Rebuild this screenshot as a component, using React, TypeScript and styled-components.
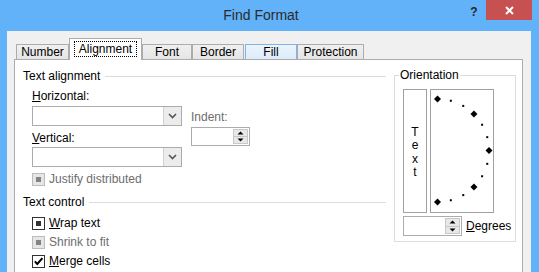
import styled, { createGlobalStyle } from "styled-components";

const GlobalStyle = createGlobalStyle`
  html, body { margin: 0; padding: 0; }
  body {
    font-family: "Liberation Sans", Arial, sans-serif;
    font-size: 12px;
    color: #000;
  }
`;

const TABS = ["Number", "Alignment", "Font", "Border", "Fill", "Protection"];
const TAB_WIDTHS: Record<string, number> = {
  Number: 53,
  Alignment: 73,
  Font: 50,
  Border: 52,
  Fill: 52,
  Protection: 67,
};

// dots on the orientation dial, 15 degree steps from -90 to 90
const DIAL_POINTS = Array.from({ length: 13 }, (_, i) => {
  const deg = -90 + i * 15;
  const rad = (deg * Math.PI) / 180;
  return {
    x: 6.5 + 51.5 * Math.cos(rad),
    y: 60.5 - 51.5 * Math.sin(rad),
    big: deg % 45 === 0,
  };
});

function Combo() {
  return (
    <ComboBox>
      <ComboField />
      <DropButton>
        <svg width="9" height="6" viewBox="0 0 9 6">
          <path d="M1 1 L4.5 4.5 L8 1" fill="none" stroke="#555" strokeWidth="1.6" />
        </svg>
      </DropButton>
    </ComboBox>
  );
}

function Spinner({ width, height }: { width: number; height: number }) {
  return (
    <SpinBox $w={width} $h={height}>
      <SpinField />
      <SpinButtons>
        <SpinButton>
          <svg width="7" height="4" viewBox="0 0 7 4">
            <path d="M0.5 3.5 L3.5 0.5 L6.5 3.5 Z" fill="#000" />
          </svg>
        </SpinButton>
        <SpinButton>
          <svg width="7" height="4" viewBox="0 0 7 4">
            <path d="M0.5 0.5 L3.5 3.5 L6.5 0.5 Z" fill="#000" />
          </svg>
        </SpinButton>
      </SpinButtons>
    </SpinBox>
  );
}

type CheckState = "checked" | "mixed";

function Check({
  state,
  disabled,
  children,
  top,
}: {
  state: CheckState;
  disabled?: boolean;
  children: React.ReactNode;
  top: number;
}) {
  return (
    <CheckRow $top={top} $disabled={disabled}>
      <CheckBox $disabled={disabled}>
        {state === "mixed" ? (
          <Mixed $disabled={disabled} />
        ) : (
          <svg width="11" height="11" viewBox="0 0 11 11">
            <path d="M1.8 5.4 L4.3 8 L9.4 2.2" fill="none" stroke="#000" strokeWidth="2" />
          </svg>
        )}
      </CheckBox>
      <span>{children}</span>
    </CheckRow>
  );
}

export default function App() {
  return (
    <>
      <GlobalStyle />
      <Window>
        <TitleBar>
          <Title>Find Format</Title>
          <HelpButton>?</HelpButton>
          <CloseButton>
            <svg width="9" height="9" viewBox="0 0 9 9">
              <path d="M1 1 L8 8 M8 1 L1 8" stroke="#fff" strokeWidth="2" />
            </svg>
          </CloseButton>
        </TitleBar>
        <Client>
          <TabRow>
            {TABS.map((t) => (
              <Tab
                key={t}
                $w={TAB_WIDTHS[t]}
                $active={t === "Alignment"}
                $hover={t === "Fill"}
              >
                {t === "Alignment" ? <Focus>{t}</Focus> : t}
              </Tab>
            ))}
          </TabRow>
          <Panel>
            <LeftCol>
              <SectionHeader>
                <span>Text alignment</span>
                <Rule />
              </SectionHeader>
              <AlignGrid>
                <Column>
                  <FieldLabel>
                    <u>H</u>orizontal:
                  </FieldLabel>
                  <ComboSlot $top={3}>
                    <Combo />
                  </ComboSlot>
                  <FieldLabel $top={5}>
                    <u>V</u>ertical:
                  </FieldLabel>
                  <ComboSlot $top={2}>
                    <Combo />
                  </ComboSlot>
                </Column>
                <Column>
                  <FieldLabel $top={21} $disabled>
                    Indent:
                  </FieldLabel>
                  <ComboSlot $top={3}>
                    <Spinner width={59} height={19} />
                  </ComboSlot>
                </Column>
              </AlignGrid>
              <Check state="mixed" disabled top={6}>
                Justify distributed
              </Check>
              <SectionHeader $top={9}>
                <span>Text control</span>
                <Rule />
              </SectionHeader>
              <Check state="mixed" top={8}>
                <u>W</u>rap text
              </Check>
              <Check state="mixed" disabled top={6}>
                Shrink to fit
              </Check>
              <Check state="checked" top={6}>
                <u>M</u>erge cells
              </Check>
            </LeftCol>
            <Group>
              <Legend>Orientation</Legend>
              <GroupBody>
                <OrientRow>
                  <TextBox>
                    <span>T</span>
                    <span>e</span>
                    <span>x</span>
                    <span>t</span>
                  </TextBox>
                  <Dial>
                    <svg width="62" height="122" viewBox="0 0 62 122">
                      {DIAL_POINTS.map((p, i) =>
                        p.big ? (
                          <path
                            key={i}
                            d={`M${p.x} ${p.y - 3.5} L${p.x + 3.5} ${p.y} L${p.x} ${p.y + 3.5} L${p.x - 3.5} ${p.y} Z`}
                            fill="#000"
                          />
                        ) : (
                          <rect key={i} x={p.x - 1} y={p.y - 1} width="2" height="2" fill="#000" />
                        )
                      )}
                    </svg>
                  </Dial>
                </OrientRow>
                <DegreesRow>
                  <Spinner width={59} height={20} />
                  <span>
                    <u>D</u>egrees
                  </span>
                </DegreesRow>
              </GroupBody>
            </Group>
          </Panel>
        </Client>
      </Window>
    </>
  );
}

const Window = styled.div`
  width: 539px;
  height: 272px;
  background: #62b2fa;
  display: flex;
  flex-direction: column;
  overflow: hidden;
`;

const TitleBar = styled.div`
  height: 31px;
  flex-shrink: 0;
  display: flex;
  align-items: flex-start;
`;

const Title = styled.div`
  flex: 1;
  padding-left: 60px;
  text-align: center;
  line-height: 31px;
  font-size: 14px;
  color: #2b2b2b;
`;

const HelpButton = styled.div`
  width: 24px;
  height: 23px;
  display: flex;
  align-items: center;
  justify-content: center;
  font-weight: bold;
  font-size: 12px;
  color: #262626;
`;

const CloseButton = styled.div`
  width: 46px;
  height: 20px;
  margin-right: 7px;
  background: #c75050;
  display: flex;
  align-items: center;
  justify-content: center;
`;

const Client = styled.div`
  flex: 1;
  min-height: 0;
  margin: 0 8px 0 7px;
  padding: 7px 8px 0 7px;
  background: #f0f0f0;
  display: flex;
  flex-direction: column;
`;

const TabRow = styled.div`
  display: flex;
  align-items: flex-end;
  margin-left: 2px;
  position: relative;
  z-index: 1;
`;

const Tab = styled.div<{ $w: number; $active?: boolean; $hover?: boolean }>`
  box-sizing: border-box;
  width: ${(p) => p.$w}px;
  height: ${(p) => (p.$active ? 22 : 15)}px;
  margin-bottom: ${(p) => (p.$active ? -1 : 0)}px;
  margin-left: ${(p) => (p.$hover ? 1 : 0)}px;
  border: 1px solid ${(p) => (p.$hover ? "#7eb4ea" : "#acacac")};
  border-bottom: none;
  background: ${(p) =>
    p.$active
      ? "#fff"
      : p.$hover
      ? "linear-gradient(#ecf4fc, #dcecfc)"
      : "linear-gradient(#f0f0f0, #e5e5e5)"};
  display: flex;
  align-items: center;
  justify-content: center;
  padding-bottom: ${(p) => (p.$active ? 2 : 0)}px;
  line-height: 13px;
  white-space: nowrap;
`;

const Focus = styled.span`
  border: 1px dotted #000;
  padding: 1px 4px 0;
  line-height: 13px;
`;

const Panel = styled.div`
  flex: 1;
  background: #fff;
  border: 1px solid #acacac;
  border-bottom: none;
  padding: 9px 6px 0 8px;
  display: flex;
  align-items: flex-start;
  gap: 8px;
`;

const LeftCol = styled.div`
  width: 363px;
  display: flex;
  flex-direction: column;
`;

const SectionHeader = styled.div<{ $top?: number }>`
  display: flex;
  align-items: center;
  gap: 5px;
  height: 14px;
  line-height: 14px;
  margin-top: ${(p) => p.$top ?? 0}px;
  white-space: nowrap;
`;

const Rule = styled.div`
  flex: 1;
  height: 1px;
  background: #dcdcdc;
`;

const AlignGrid = styled.div`
  display: flex;
  gap: 9px;
  margin-top: 6px;
  padding-left: 9px;
`;

const Column = styled.div`
  display: flex;
  flex-direction: column;
`;

const FieldLabel = styled.div<{ $top?: number; $disabled?: boolean }>`
  height: 14px;
  line-height: 14px;
  margin-top: ${(p) => p.$top ?? 0}px;
  color: ${(p) => (p.$disabled ? "#6d6d6d" : "#000")};
`;

const ComboSlot = styled.div<{ $top: number }>`
  margin-top: ${(p) => p.$top}px;
`;

const ComboBox = styled.div`
  box-sizing: border-box;
  width: 150px;
  height: 20px;
  border: 1px solid #acacac;
  background: #fff;
  display: flex;
`;

const ComboField = styled.div`
  flex: 1;
`;

const DropButton = styled.div`
  width: 17px;
  border-left: 1px solid #d0d0d0;
  background: #ececec;
  display: flex;
  align-items: center;
  justify-content: center;
`;

const SpinBox = styled.div<{ $w: number; $h: number }>`
  box-sizing: border-box;
  width: ${(p) => p.$w}px;
  height: ${(p) => p.$h}px;
  border: 1px solid #acacac;
  background: #fff;
  display: flex;
  padding: 1px 1px 1px 0;
`;

const SpinField = styled.div`
  flex: 1;
`;

const SpinButtons = styled.div`
  width: 15px;
  display: flex;
  flex-direction: column;
`;

const SpinButton = styled.div`
  flex: 1;
  box-sizing: border-box;
  border: 1px solid #c8c8c8;
  background: #e8e8e8;
  display: flex;
  align-items: center;
  justify-content: center;
  & + & {
    border-top: none;
  }
`;

const CheckRow = styled.div<{ $top: number; $disabled?: boolean }>`
  display: flex;
  align-items: center;
  gap: 4px;
  height: 13px;
  line-height: 13px;
  margin-top: ${(p) => p.$top}px;
  padding-left: 9px;
  color: ${(p) => (p.$disabled ? "#6d6d6d" : "#000")};
  white-space: nowrap;
`;

const CheckBox = styled.div<{ $disabled?: boolean }>`
  box-sizing: border-box;
  width: 13px;
  height: 13px;
  border: 1px solid ${(p) => (p.$disabled ? "#bcbcbc" : "#333")};
  background: ${(p) => (p.$disabled ? "#e6e6e6" : "#fff")};
  display: flex;
  align-items: center;
  justify-content: center;
  flex-shrink: 0;
`;

const Mixed = styled.div<{ $disabled?: boolean }>`
  width: 5px;
  height: 5px;
  background: ${(p) => (p.$disabled ? "#838383" : "#333")};
`;

const Group = styled.fieldset`
  box-sizing: border-box;
  width: 122px;
  margin: -1px 0 0 0;
  padding: 0 0 5px 0;
  min-width: 0;
  border: 1px solid #dcdcdc;
`;

const Legend = styled.legend`
  margin-left: 4px;
  padding: 0 1px;
  line-height: 14px;
  height: 14px;
`;

const GroupBody = styled.div`
  padding: 7px 0 0 8px;
`;

const OrientRow = styled.div`
  display: flex;
  gap: 3px;
`;

const TextBox = styled.div`
  box-sizing: border-box;
  width: 24px;
  height: 124px;
  border: 1px solid #a0a0a0;
  display: flex;
  flex-direction: column;
  align-items: center;
  justify-content: center;
  padding-top: 3px;
  line-height: 13.5px;
`;

const Dial = styled.div`
  box-sizing: border-box;
  width: 64px;
  height: 124px;
  border: 1px solid #a0a0a0;
  display: flex;
`;

const DegreesRow = styled.div`
  display: flex;
  align-items: center;
  gap: 4px;
  margin-top: 3px;
`;
